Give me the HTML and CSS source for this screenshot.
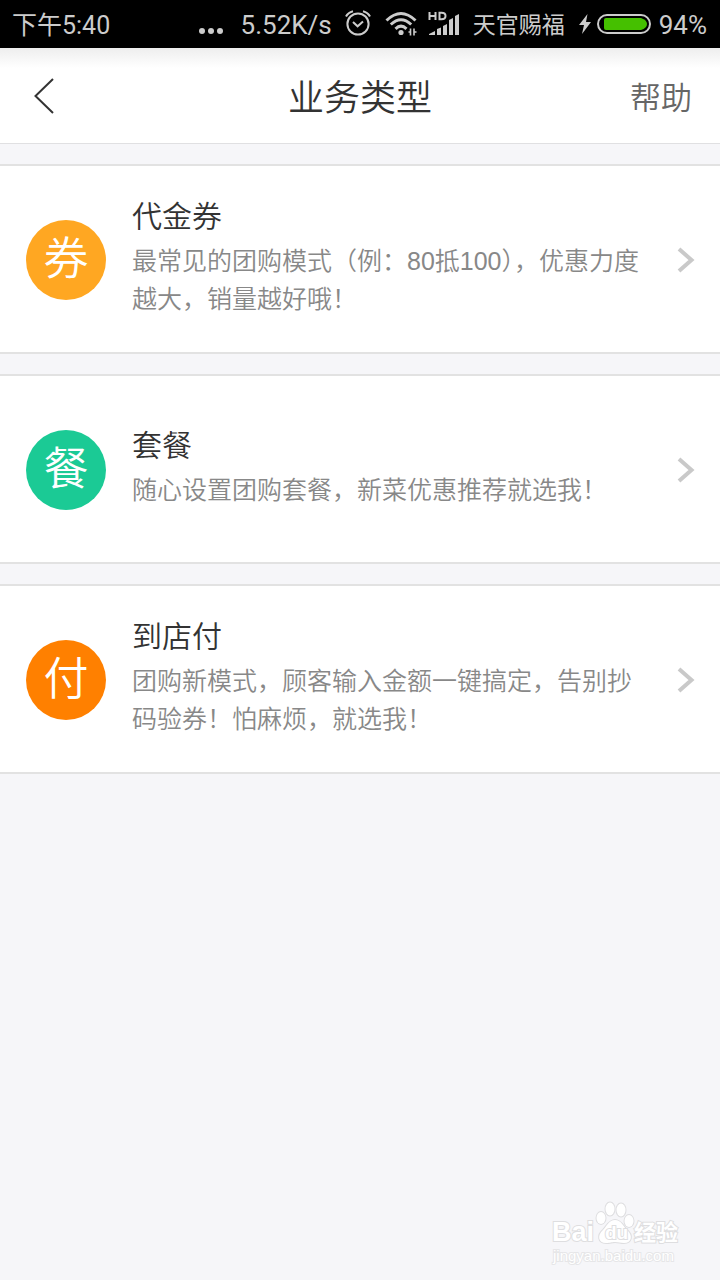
FILE: index.html
```html
<!DOCTYPE html>
<html lang="zh-CN">
<head>
<meta charset="utf-8">
<meta name="viewport" content="width=device-width, initial-scale=1">
<title>业务类型</title>
<link rel="stylesheet" href="styles.css">
</head>
<body class="page">
  <div class="status">
    <span class="status-time">下午5:40</span>
    <div class="status-info">
      <svg class="dots" width="24" height="8" viewBox="0 0 24 8" fill="#ccc"><circle cx="3" cy="4" r="3"/><circle cx="12" cy="4" r="3"/><circle cx="21" cy="4" r="3"/></svg>
      <span class="status-speed">5.52K/s</span>
      <svg class="alarm" width="26" height="26" viewBox="0 0 26 26" fill="none" stroke="#ccc" stroke-width="2"><circle cx="13" cy="14" r="10.6"/><path d="M8 12l4.600 4.300L18 11.500M1 6.500Q3 2.500 8 1.200M25 6.500Q23 2.500 18 1.200"/></svg>
      <svg class="wifi" width="32" height="26" viewBox="0 0 32 26" fill="none" stroke="#ccc" stroke-width="3"><path d="M1.500 9.500Q16-4.500 30.500 9.500M5.800 13.500Q16 4 26.200 13.500M10.500 17.800Q16 12.500 21.500 17.800"/><circle cx="16" cy="21.500" r="2.600" fill="#ccc" stroke="none"/><path d="M25.500 17.500v7M29 17.500v7M23.500 21h2M29 21h2.500" stroke-width="1.600"/></svg>
      <svg class="signal" width="32" height="26" viewBox="0 0 32 26" fill="#ccc"><path d="M1 24v-1l6-3v4zM9 24v-6l4-1.500V24zM15 24v-9l4-2V24zM21 24V9l4-2v17zM27 24V5l4-2v21z"/><path d="M1.500 1v8M7.500 1v8M1.500 5h6M11.500 1.800v6.400h2Q17.500 8.200 17.500 5T13.500 1.800z" fill="none" stroke="#ccc" stroke-width="2"/></svg>
      <span class="status-carrier">天官赐福</span>
      <svg class="bolt" width="12" height="20" viewBox="0 0 12 20" fill="#ccc"><path d="M8.500 0L0 11h5L3 20 12 8H7z"/></svg>
      <svg class="battery" width="54" height="20" viewBox="0 0 54 20"><rect x="1" y="1" width="52" height="18" rx="9" fill="none" stroke="#ccc" stroke-width="2"/><path d="M9 4h35q6 2 6 6t-6 6H9q-2 0-2-2V6q0-2 2-2z" fill="#45c000"/></svg>
      <span class="status-level">94%</span>
    </div>
  </div>

  <header class="header">
    <button class="back" type="button" aria-label="返回">
      <svg width="20" height="36" viewBox="0 0 20 36" fill="none" stroke="#333" stroke-width="2"><path d="M19 1L1.500 18 19 35"/></svg>
    </button>
    <h1 class="title">业务类型</h1>
    <a class="help" href="#">帮助</a>
  </header>

  <main class="list">
    <a class="card" href="#">
      <span class="badge badge-voucher">券</span>
      <span class="text"><span class="name">代金券</span><span class="desc">最常见的团购模式（例：80抵100），优惠力度越大，销量越好哦！</span></span>
      <svg class="arrow" width="18" height="26" viewBox="0 0 18 26" fill="none" stroke="#c9c9c9" stroke-width="4"><path d="M2 2l12.500 11L2 24"/></svg>
    </a>
    <a class="card" href="#">
      <span class="badge badge-meal">餐</span>
      <span class="text"><span class="name">套餐</span><span class="desc">随心设置团购套餐，新菜优惠推荐就选我！</span></span>
      <svg class="arrow" width="18" height="26" viewBox="0 0 18 26" fill="none" stroke="#c9c9c9" stroke-width="4"><path d="M2 2l12.500 11L2 24"/></svg>
    </a>
    <a class="card" href="#">
      <span class="badge badge-pay">付</span>
      <span class="text"><span class="name">到店付</span><span class="desc">团购新模式，顾客输入金额一键搞定，告别抄码验券！怕麻烦，就选我！</span></span>
      <svg class="arrow" width="18" height="26" viewBox="0 0 18 26" fill="none" stroke="#c9c9c9" stroke-width="4"><path d="M2 2l12.500 11L2 24"/></svg>
    </a>
  </main>

  <svg class="watermark" width="134" height="66" viewBox="0 0 134 66" fill="#fff" stroke="#dedee0" stroke-width="2" paint-order="stroke">
    <text class="mark-latin" x="2" y="41">Bai</text>
    <ellipse cx="51" cy="18" rx="4.500" ry="6"/><ellipse cx="60" cy="9" rx="4.500" ry="6.500"/><ellipse cx="71" cy="10" rx="4.500" ry="6.500"/><ellipse cx="79" cy="21" rx="4.500" ry="6"/>
    <path d="M65 20C59 20 57 26 53 30C47 35 48 43 56 43C61 43 61 42 65 42S70 43 74 43C82 43 83 35 77 30C73 26 71 20 65 20Z"/>
    <text class="mark-du" x="55" y="39">du</text>
    <text class="mark-han" x="84" y="40">经验</text>
    <text class="mark-url" x="3" y="61">jingyan.baidu.com</text>
  </svg>
</body>
</html>
```
FILE: styles.css
```css
* { box-sizing: border-box; }

.page {
  position: relative;
  margin: 0;
  min-height: 100vh;
  background: #f6f6f9;
  color: #333;
  font-family: Roboto, "Noto Sans CJK SC", sans-serif;
  font-weight: 350;
}

.status {
  display: flex;
  align-items: center;
  justify-content: space-between;
  height: 48px;
  padding: 2px 13px 0 12px;
  background: #000;
  color: #ccc;
  font-size: 26px;
  font-weight: 400;
  line-height: 46px;
  white-space: nowrap;
}

.status-time { padding-top: 2px; font-size: 25px; }
.status-info { display: flex; align-items: center; }
.dots { margin: 12px 18px 0 0; }
.alarm { margin: 0 14px 4px 13px; }
.wifi { margin: 0 11px 2px 0; }
.signal { margin: 0 13px 2px 0; }
.status-carrier { padding-top: 2px; font-size: 23px; }
.bolt { margin: 0 6px 2px 14px; }
.battery { margin: 0 8px 2px 0; }

.header {
  display: grid;
  grid-template-columns: 1fr auto 1fr;
  align-items: center;
  height: 96px;
  padding: 0 28px;
  border-bottom: 1px solid #e0e0e2;
  background: linear-gradient(#eee, #fff 20px);
}

.back {
  justify-self: start;
  display: flex;
  padding: 0 6px;
  border: 0;
  background: none;
}

.title {
  margin: 0;
  padding-top: 6px;
  font-size: 36px;
  font-weight: 350;
  line-height: 48px;
}

.help {
  justify-self: end;
  padding-top: 6px;
  color: #666;
  font-size: 31px;
  line-height: 48px;
  text-decoration: none;
}

.list {
  display: flex;
  flex-direction: column;
  gap: 20px;
  padding-top: 20px;
}

.card {
  display: flex;
  align-items: center;
  min-height: 190px;
  padding: 2px 25px 0 26px;
  border: solid #e2e2e2;
  border-width: 2px 0;
  background: #fff;
  color: inherit;
  text-decoration: none;
}

.badge {
  flex: none;
  width: 80px;
  height: 80px;
  border-radius: 50%;
  color: #fff;
  font-size: 45px;
  line-height: 80px;
  text-align: center;
}

.badge-voucher { background: #ffa722; }
.badge-meal { background: #1bca95; }
.badge-pay { background: #ff8000; }

.text {
  flex: 1;
  display: flex;
  flex-direction: column;
  gap: 3px;
  padding: 0 0 8px;
  margin: 0 24px 0 26px;
}

.name {
  font-size: 30px;
  line-height: 44px;
}

.desc {
  color: #888;
  font-family: "Liberation Sans", "Noto Sans CJK SC", sans-serif;
  font-size: 25px;
  line-height: 38px;
}

.arrow { flex: none; }

.watermark {
  position: absolute;
  right: 36px;
  bottom: 14px;
}

.mark-latin { font: 700 27px "Liberation Sans", sans-serif; }
.mark-du { font: 700 19px "Liberation Sans", sans-serif; }
.mark-han { font: 700 22px "Noto Sans CJK SC", sans-serif; }
.mark-url { font: 400 15px "Liberation Sans", sans-serif; stroke: #e6e6e8; }
```
